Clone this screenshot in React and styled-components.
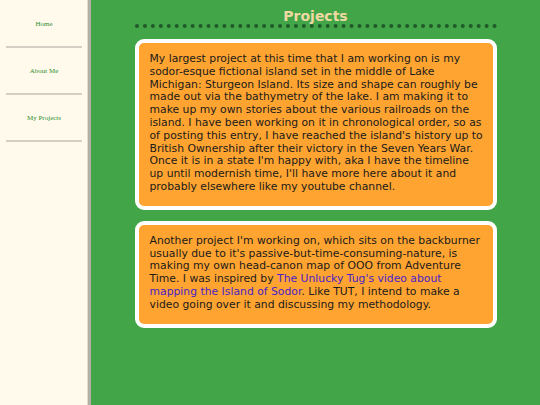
import React from 'react';
import styled, { createGlobalStyle } from 'styled-components';

const GlobalStyle = createGlobalStyle`
  html, body {
    margin: 0;
    padding: 0;
    height: 100%;
    background: #42a547;
  }
  #root {
    height: 100%;
  }
`;

const Page = styled.div`
  display: flex;
  min-height: 405px;
  height: 100%;
`;

const Sidebar = styled.nav`
  width: 76px;
  flex-shrink: 0;
  background: #fffaec;
  border-right: 3px solid #b3aea6;
  box-shadow: inset -1px 0 0 #e2ddd3;
  display: flex;
  flex-direction: column;
  padding: 1px 6px 0;
`;

const NavItem = styled.a`
  display: flex;
  align-items: center;
  justify-content: center;
  height: 45px;
  border-bottom: 2px solid #d3cfc4;
  font-family: 'Liberation Serif', 'Times New Roman', serif;
  font-size: 7px;
  color: #2f8f30;
  text-decoration: none;
`;

const Main = styled.main`
  flex: 1;
  display: flex;
  flex-direction: column;
  align-items: center;
  padding-bottom: 20px;
`;

const Column = styled.div`
  width: 362px;
  display: flex;
  flex-direction: column;
  gap: 11px;
`;

const Title = styled.h1`
  margin: 0;
  padding-top: 8px;
  text-align: center;
  font-family: 'DejaVu Sans', Verdana, sans-serif;
  font-weight: bold;
  font-size: 14px;
  line-height: 16px;
  color: #eed9a3;
  border-bottom: 4px dotted #1f5a29;
`;

const Card = styled.section`
  background: #ffa431;
  border: 4px solid #ffffff;
  border-radius: 9px;
  padding: 10px 8px 12px 11px;
  font-family: 'DejaVu Sans', Verdana, sans-serif;
  font-size: 10.8px;
  line-height: 12.8px;
  color: #1a1a1a;
`;

const Text = styled.p`
  margin: 0;
`;

const Link = styled.a`
  color: #4a1fc6;
  text-decoration: none;
`;

export default function App() {
  return (
    <>
      <GlobalStyle />
      <Page>
        <Sidebar>
          <NavItem href="#">Home</NavItem>
          <NavItem href="#">About Me</NavItem>
          <NavItem href="#">My Projects</NavItem>
        </Sidebar>
        <Main>
          <Column>
            <Title>Projects</Title>
            <Card>
              <Text>
                My largest project at this time that I am working on is my sodor-esque fictional
                island set in the middle of Lake Michigan: Sturgeon Island. Its size and shape can
                roughly be made out via the bathymetry of the lake. I am making it to make up my own
                stories about the various railroads on the island. I have been working on it in
                chronological order, so as of posting this entry, I have reached the island's history
                up to British Ownership after their victory in the Seven Years War. Once it is in a
                state I'm happy with, aka I have the timeline up until modernish time, I'll have more
                here about it and probably elsewhere like my youtube channel.
              </Text>
            </Card>
            <Card>
              <Text>
                Another project I'm working on, which sits on the backburner usually due to it's
                passive-but-time-consuming-nature, is making my own head-canon map of OOO from
                Adventure Time. I was inspired by{' '}
                <Link href="#">The Unlucky Tug's video about mapping the Island of Sodor</Link>. Like
                TUT, I intend to make a video going over it and discussing my methodology.
              </Text>
            </Card>
          </Column>
        </Main>
      </Page>
    </>
  );
}
